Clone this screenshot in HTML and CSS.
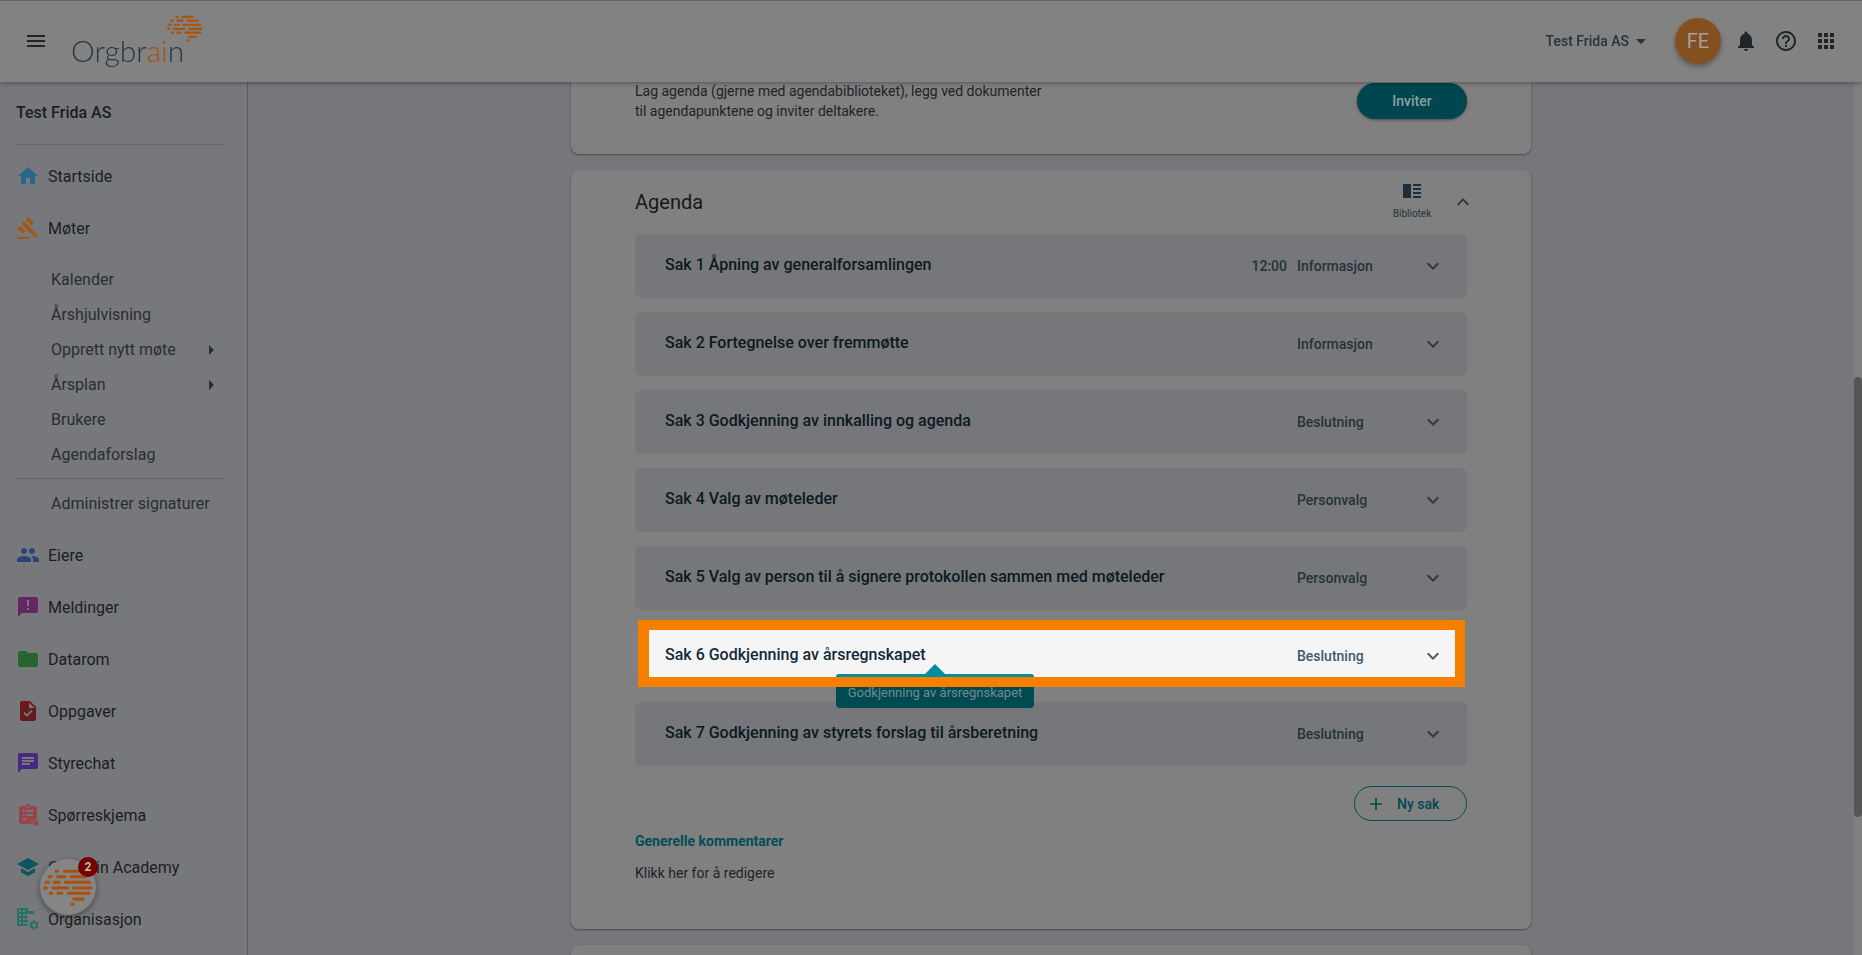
FILE: index.html
```html
<!DOCTYPE html>
<html lang="nb">
<head>
    <meta charset="UTF-8">
    <meta name="viewport" content="width=device-width, initial-scale=1.0">
    <title>Orgbrain</title>
    <link rel="stylesheet" href="styles.css">
</head>
<body>
    <svg class="defs" width="0" height="0">
        <symbol id="brain" viewBox="0 0 150 110">
            <rect x="35" y="2" width="13" height="9" rx="3"/><rect x="60" y="2" width="50" height="9" rx="3"/>
            <rect x="15" y="18" width="13" height="9" rx="3"/><rect x="40" y="18" width="30" height="9" rx="3"/><rect x="80" y="18" width="52" height="9" rx="3"/>
            <rect x="5" y="35" width="15" height="9" rx="3"/><rect x="30" y="35" width="23" height="9" rx="3"/><rect x="63" y="35" width="80" height="9" rx="3"/>
            <rect x="0" y="52" width="15" height="9" rx="3"/><rect x="25" y="52" width="52" height="9" rx="3"/><rect x="88" y="52" width="60" height="9" rx="3"/>
            <rect x="17" y="68" width="13" height="9" rx="3"/><rect x="40" y="68" width="20" height="9" rx="3"/><rect x="72" y="68" width="70" height="9" rx="3"/>
            <rect x="88" y="85" width="37" height="9" rx="3"/>
            <rect x="82" y="101" width="13" height="9" rx="3"/>
        </symbol>
    </svg>

    <header class="topbar">
        <svg class="icon menu-icon" viewBox="0 0 24 24"><path d="M3 18h18v-2H3v2zm0-5h18v-2H3v2zm0-7v2h18V6H3z"/></svg>
        <div class="logo">
            <span class="logo-text">Orgbr<span class="logo-ai">ai</span>n</span>
            <svg class="logo-brain"><use href="#brain"/></svg>
        </div>
        <div class="topbar-right">
            <span class="company-menu">Test Frida AS</span>
            <svg class="caret" viewBox="0 0 24 24"><path d="M7 10l5 5 5-5z"/></svg>
            <div class="avatar">FE</div>
            <svg class="icon" viewBox="0 0 24 24"><path d="M12 22c1.1 0 2-.9 2-2h-4c0 1.1.89 2 2 2zm6-6v-5c0-3.07-1.64-5.64-4.5-6.32V4c0-.83-.67-1.5-1.5-1.5s-1.5.67-1.5 1.5v.68C7.63 5.36 6 7.92 6 11v5l-2 2v1h16v-1l-2-2z"/></svg>
            <svg class="icon" viewBox="0 0 24 24"><path d="M11 18h2v-2h-2v2zm1-16C6.48 2 2 6.48 2 12s4.48 10 10 10 10-4.48 10-10S17.52 2 12 2zm0 18c-4.41 0-8-3.59-8-8s3.59-8 8-8 8 3.59 8 8-3.59 8-8 8zm0-14c-2.21 0-4 1.79-4 4h2c0-1.1.9-2 2-2s2 .9 2 2c0 2-3 1.75-3 5h2c0-2.25 3-2.5 3-5 0-2.21-1.79-4-4-4z"/></svg>
            <svg class="icon" viewBox="0 0 24 24"><path d="M4 8h4V4H4v4zm6 12h4v-4h-4v4zm-6 0h4v-4H4v4zm0-6h4v-4H4v4zm6 0h4v-4h-4v4zm6-10v4h4V4h-4zm-6 4h4V4h-4v4zm6 6h4v-4h-4v4zm0 6h4v-4h-4v4z"/></svg>
        </div>
    </header>

    <div class="app">
        <aside class="sidebar">
            <div class="sidebar-company">Test Frida AS</div>
            <hr class="sidebar-line">
            <a class="nav-item">
                <svg class="icon home" viewBox="0 0 24 24"><path d="M10 20v-6h4v6h5v-8h3L12 3 2 12h3v8z"/></svg>Startside
            </a>
            <a class="nav-item">
                <svg class="icon gavel" viewBox="0 0 24 24"><path d="M1 21h12v2H1zM5.245 8.07l2.83-2.827 14.14 14.142-2.828 2.828zM12.317 1l5.657 5.656-2.83 2.83-5.654-5.66zM3.825 9.485l5.657 5.657-2.828 2.828-5.657-5.657z"/></svg>Møter
            </a>
            <div class="sub-nav">
                <a class="sub-item">Kalender</a>
                <a class="sub-item">Årshjulvisning</a>
                <a class="sub-item">Opprett nytt møte<svg class="sub-arrow" viewBox="0 0 24 24"><path d="M10 17l5-5-5-5v10z"/></svg></a>
                <a class="sub-item">Årsplan<svg class="sub-arrow" viewBox="0 0 24 24"><path d="M10 17l5-5-5-5v10z"/></svg></a>
                <a class="sub-item">Brukere</a>
                <a class="sub-item">Agendaforslag</a>
            </div>
            <hr class="sidebar-line sidebar-line-sub">
            <div class="sub-nav-single">
                <a class="sub-item">Administrer signaturer</a>
            </div>
            <a class="nav-item">
                <svg class="icon people" viewBox="0 0 24 24"><path d="M16 11c1.66 0 2.99-1.34 2.99-3S17.66 5 16 5c-1.66 0-3 1.34-3 3s1.34 3 3 3zm-8 0c1.66 0 2.99-1.34 2.99-3S9.66 5 8 5C6.34 5 5 6.34 5 8s1.34 3 3 3zm0 2c-2.33 0-7 1.17-7 3.5V19h14v-2.5c0-2.33-4.67-3.5-7-3.5zm8 0c-.29 0-.62.02-.97.05 1.16.84 1.97 1.97 1.97 3.45V19h6v-2.5c0-2.33-4.67-3.5-7-3.5z"/></svg>Eiere
            </a>
            <a class="nav-item">
                <svg class="icon messages" viewBox="0 0 24 24"><path d="M20 2H4c-1.1 0-1.99.9-1.99 2L2 22l4-4h14c1.1 0 2-.9 2-2V4c0-1.1-.9-2-2-2zm-7 9h-2V5h2v6zm0 4h-2v-2h2v2z"/></svg>Meldinger
            </a>
            <a class="nav-item">
                <svg class="icon folder" viewBox="0 0 24 24"><path d="M10 4H4c-1.1 0-1.99.9-1.99 2L2 18c0 1.1.9 2 2 2h16c1.1 0 2-.9 2-2V8c0-1.1-.9-2-2-2h-8l-2-2z"/></svg>Datarom
            </a>
            <a class="nav-item">
                <svg class="icon tasks" viewBox="0 0 24 24"><path d="M14 2H6c-1.1 0-1.99.9-1.99 2L4 20c0 1.1.89 2 1.99 2H18c1.1 0 2-.9 2-2V8l-6-6zm-3.06 16L7.4 14.46l1.41-1.41 2.12 2.12 4.24-4.24 1.41 1.41L10.94 18zM13 9V3.5L18.5 9H13z"/></svg>Oppgaver
            </a>
            <a class="nav-item">
                <svg class="icon chat" viewBox="0 0 24 24"><path d="M20 2H4c-1.1 0-1.99.9-1.99 2L2 22l4-4h14c1.1 0 2-.9 2-2V4c0-1.1-.9-2-2-2zM6 9h12v2H6V9zm8 5H6v-2h8v2zm4-6H6V6h12v2z"/></svg>Styrechat
            </a>
            <a class="nav-item">
                <svg class="icon survey" viewBox="0 0 24 24"><path d="M19 3h-4.18C14.4 1.84 13.3 1 12 1c-1.3 0-2.4.84-2.82 2H5c-1.1 0-2 .9-2 2v14c0 1.1.9 2 2 2h14c1.1 0 2-.9 2-2V5c0-1.1-.9-2-2-2zm-7 0c.55 0 1 .45 1 1s-.45 1-1 1-1-.45-1-1 .45-1 1-1zM10 17H7v-2h3v2zm7-4H10v-2h7v2zm0-4H10V7h7v2zM8.5 9H7V7h1.5v2zm0 4H7v-2h1.5v2z"/><circle cx="20" cy="20" r="3.2" stroke="#76777a" stroke-width="1"/></svg>Spørreskjema
            </a>
            <a class="nav-item">
                <svg class="icon school" viewBox="0 0 24 24"><path d="M5 13.18v4L12 21l7-3.82v-4L12 17l-7-3.82zM12 3L1 9l11 6 11-6L12 3z"/></svg>Orgbrain Academy
            </a>
            <a class="nav-item">
                <svg class="icon domain" viewBox="0 0 24 24"><path d="M12 4V1H1v18h11v-2h-2v-2h2v-2h-2v-2h2V9h-2V7h8V4h-6zM5 17H3v-2h2v2zm0-4H3v-2h2v2zm0-4H3V7h2v2zm0-4H3V3h2v2zm4 12H7v-2h2v2zm0-4H7v-2h2v2zm0-4H7V7h2v2zm0-4H7V3h2v2z"/><path transform="translate(12 12) scale(.5)" d="M19.14 12.94c.04-.3.06-.61.06-.94 0-.32-.02-.64-.07-.94l2.03-1.58c.18-.14.23-.41.12-.61l-1.92-3.32c-.12-.22-.37-.29-.59-.22l-2.39.96c-.5-.38-1.03-.7-1.62-.94l-.36-2.54c-.04-.24-.24-.41-.48-.41h-3.84c-.24 0-.43.17-.47.41l-.36 2.54c-.59.24-1.13.57-1.62.94l-2.39-.96c-.22-.08-.47 0-.59.22L2.74 8.87c-.12.21-.08.47.12.61l2.03 1.58c-.05.3-.09.63-.09.94s.02.64.07.94l-2.03 1.58c-.18.14-.23.41-.12.61l1.92 3.32c.12.22.37.29.59.22l2.39-.96c.5.38 1.03.7 1.62.94l.36 2.54c.05.24.24.41.48.41h3.84c.24 0 .44-.17.47-.41l.36-2.54c.59-.24 1.13-.56 1.62-.94l2.39.96c.22.08.47 0 .59-.22l1.92-3.32c.12-.22.07-.47-.12-.61l-2.01-1.58zM12 15.6c-1.98 0-3.6-1.62-3.6-3.6s1.62-3.6 3.6-3.6 3.6 1.62 3.6 3.6-1.62 3.6-3.6 3.6z"/></svg>Organisasjon
            </a>
        </aside>

        <main class="main">
            <section class="card card-invite">
                <p class="invite-text">Lag agenda (gjerne med agendabiblioteket), legg ved dokumenter til agendapunktene og inviter deltakere.</p>
                <button class="btn-invite">Inviter</button>
            </section>

            <section class="card card-agenda">
                <div class="agenda-head">
                    <h2>Agenda</h2>
                    <div class="library">
                        <svg class="library-icon" viewBox="0 0 18 14"><rect x="0" y="0" width="8" height="14"/><rect x="10" y="0" width="8" height="2"/><rect x="10" y="4" width="8" height="2"/><rect x="10" y="8" width="8" height="2"/><rect x="10" y="12" width="8" height="2"/></svg>
                        <span>Bibliotek</span>
                    </div>
                    <svg class="icon chevron-up" viewBox="0 0 24 24"><path d="M12 8l-6 6 1.41 1.41L12 10.83l4.59 4.58L18 14z"/></svg>
                </div>

                <div class="agenda-list">
                    <div class="agenda-row">
                        <span class="row-title">Sak 1 Åpning av generalforsamlingen</span>
                        <span class="row-time">12:00</span>
                        <span class="row-type">Informasjon</span>
                        <svg class="icon row-chevron" viewBox="0 0 24 24"><path d="M16.59 8.59L12 13.17 7.41 8.59 6 10l6 6 6-6z"/></svg>
                    </div>
                    <div class="agenda-row">
                        <span class="row-title">Sak 2 Fortegnelse over fremmøtte</span>
                        <span class="row-type">Informasjon</span>
                        <svg class="icon row-chevron" viewBox="0 0 24 24"><path d="M16.59 8.59L12 13.17 7.41 8.59 6 10l6 6 6-6z"/></svg>
                    </div>
                    <div class="agenda-row">
                        <span class="row-title">Sak 3 Godkjenning av innkalling og agenda</span>
                        <span class="row-type">Beslutning</span>
                        <svg class="icon row-chevron" viewBox="0 0 24 24"><path d="M16.59 8.59L12 13.17 7.41 8.59 6 10l6 6 6-6z"/></svg>
                    </div>
                    <div class="agenda-row">
                        <span class="row-title">Sak 4 Valg av møteleder</span>
                        <span class="row-type">Personvalg</span>
                        <svg class="icon row-chevron" viewBox="0 0 24 24"><path d="M16.59 8.59L12 13.17 7.41 8.59 6 10l6 6 6-6z"/></svg>
                    </div>
                    <div class="agenda-row">
                        <span class="row-title">Sak 5 Valg av person til å signere protokollen sammen med møteleder</span>
                        <span class="row-type">Personvalg</span>
                        <svg class="icon row-chevron" viewBox="0 0 24 24"><path d="M16.59 8.59L12 13.17 7.41 8.59 6 10l6 6 6-6z"/></svg>
                    </div>
                    <div class="agenda-row agenda-row-active">
                        <div class="row-tooltip">Godkjenning av årsregnskapet</div>
                        <div class="row-highlight"></div>
                        <div class="tooltip-strip"></div>
                        <div class="tooltip-arrow"></div>
                        <span class="row-title">Sak 6 Godkjenning av årsregnskapet</span>
                        <span class="row-type">Beslutning</span>
                        <svg class="icon row-chevron" viewBox="0 0 24 24"><path d="M16.59 8.59L12 13.17 7.41 8.59 6 10l6 6 6-6z"/></svg>
                    </div>
                    <div class="agenda-row">
                        <span class="row-title">Sak 7 Godkjenning av styrets forslag til årsberetning</span>
                        <span class="row-type">Beslutning</span>
                        <svg class="icon row-chevron" viewBox="0 0 24 24"><path d="M16.59 8.59L12 13.17 7.41 8.59 6 10l6 6 6-6z"/></svg>
                    </div>
                </div>

                <button class="btn-new">
                    <svg class="btn-new-icon" viewBox="0 0 24 24"><path d="M19 13h-6v6h-2v-6H5v-2h6V5h2v6h6v2z"/></svg>Ny sak
                </button>

                <div class="comments-title">Generelle kommentarer</div>
                <div class="comments-text">Klikk her for å redigere</div>
            </section>

            <section class="card card-next"></section>
        </main>

        <div class="scrollbar"><div class="scrollbar-thumb"></div></div>
    </div>

    <div class="help-fab">
        <svg class="help-brain"><use href="#brain"/></svg>
        <span class="help-badge">2</span>
    </div>
</body>
</html>
```

FILE: styles.css
```css
* {
    box-sizing: border-box;
}
html, body {
    height: 100%;
    overflow: hidden;
}
body {
    margin: 0;
    font-family: Roboto, Arial, sans-serif;
    font-size: 14px;
    color: #1f2326;
    background-color: #76777a;
}
.defs {
    position: absolute;
}
.icon {
    width: 24px;
    height: 24px;
    flex: none;
    fill: #1f2529;
}

/* top bar */
.topbar {
    position: fixed;
    top: 0;
    left: 0;
    right: 0;
    z-index: 10;
    height: 82px;
    display: flex;
    align-items: center;
    padding-left: 24px;
    padding-right: 24px;
    padding-bottom: 1px;
    background-color: #828282;
    border-top: 1px solid #666;
    box-shadow: 0 1px 5px rgba(0, 0, 0, 0.35);
}
.menu-icon {
    margin-right: 24px;
}
.logo {
    position: relative;
    height: 60px;
    width: 140px;
}
.logo-text {
    position: absolute;
    left: -1px;
    top: 19px;
    font-family: Lato, sans-serif;
    font-weight: 300;
    font-size: 30px;
    line-height: 40px;
    color: #233a46;
}
.logo-ai {
    color: #a8520c;
}
.logo-brain {
    position: absolute;
    left: 95px;
    top: 4px;
    width: 36px;
    height: 27px;
    fill: #a8520c;
}
.topbar-right {
    margin-left: auto;
    display: flex;
    align-items: center;
}
.company-menu {
    font-weight: 500;
    color: #24333b;
}
.caret {
    width: 24px;
    height: 24px;
    fill: #24333b;
    margin-right: 22px;
}
.avatar {
    width: 46px;
    height: 46px;
    border-radius: 50%;
    margin-right: 13px;
    background-color: #85501f;
    color: #a3a3a3;
    font-size: 20px;
    display: flex;
    align-items: center;
    justify-content: center;
    box-shadow: 0 3px 5px rgba(0, 0, 0, 0.3);
}
.topbar-right .icon + .icon {
    margin-left: 16px;
}

/* layout */
.app {
    display: flex;
    height: 100vh;
    overflow: hidden;
}

/* sidebar */
.sidebar {
    width: 248px;
    flex: none;
    padding-top: 98px;
    border-right: 1px solid #5a5b5e;
    background-color: #77787b;
}
.sidebar-company {
    padding-left: 16px;
    font-size: 16px;
    font-weight: 500;
    line-height: 30px;
    color: #1b1e21;
}
.sidebar-line {
    margin: 16px 23px 5px 16px;
    border: 0;
    border-top: 1px solid #66676a;
}
.nav-item {
    display: flex;
    align-items: center;
    gap: 8px;
    height: 52px;
    padding-left: 16px;
    font-size: 16px;
    color: #1b1e21;
}
.sub-nav {
    padding-top: 8px;
}
.sub-nav-single {
    margin-bottom: 8px;
}
.sub-item {
    display: flex;
    align-items: center;
    height: 35px;
    padding-left: 51px;
    padding-right: 24px;
    font-size: 16px;
    color: #292e31;
}
.sub-arrow {
    width: 24px;
    height: 24px;
    margin-left: auto;
    fill: #292e31;
}
.sidebar-line-sub {
    margin: 6px 23px 7px 16px;
}
.home { fill: #2a658a; }
.gavel { fill: #a05a18; }
.people { fill: #2a4478; }
.messages { fill: #642766; }
.folder { fill: #28642e; }
.tasks { fill: #651b1d; }
.chat { fill: #462a7e; }
.survey { fill: #984549; }
.school { fill: #0c5460; }
.domain { fill: #277268; }

/* main column */
.main {
    flex: 1;
    min-width: 0;
    padding-top: 40px;
    display: flex;
    flex-direction: column;
    align-items: center;
    gap: 16px;
    overflow: hidden;
}
.card {
    width: 960px;
    flex: none;
    padding-left: 64px;
    padding-right: 64px;
    background-color: #808080;
    border-radius: 8px;
    box-shadow: 0 1px 2px rgba(0, 0, 0, 0.4);
}
.card-invite {
    height: 114px;
    padding-top: 41px;
    display: flex;
    justify-content: space-between;
    align-items: flex-start;
}
.invite-text {
    margin: 0;
    max-width: 420px;
    line-height: 20px;
    color: #1f2326;
}
.btn-invite {
    width: 110px;
    height: 36px;
    margin-top: 2px;
    border: none;
    border-radius: 18px;
    background-color: #00464f;
    color: #8d9fa1;
    font-family: inherit;
    font-size: 14px;
    font-weight: 500;
    box-shadow: 0 1px 3px rgba(0, 0, 0, 0.4);
}
.card-agenda {
    display: flex;
    flex-direction: column;
    height: 759px;
}
.agenda-head {
    height: 64px;
    display: flex;
    align-items: center;
}
.agenda-head h2 {
    margin: 0 auto 0 0;
    font-size: 20px;
    font-weight: 400;
    color: #15181b;
}
.library {
    width: 50px;
    padding-bottom: 1px;
    display: flex;
    flex-direction: column;
    align-items: center;
    gap: 10px;
    font-size: 10px;
    color: #24333b;
}
.library-icon {
    width: 18px;
    height: 14px;
    fill: #1f2e36;
}
.chevron-up {
    margin-left: 14px;
    margin-right: -8px;
    fill: #353739;
}
.agenda-list {
    display: flex;
    flex-direction: column;
    gap: 14px;
}
.agenda-row {
    position: relative;
    height: 64px;
    display: flex;
    align-items: center;
    padding-left: 30px;
    padding-right: 22px;
    border-radius: 6px;
    background-color: #76777a;
}
.row-title {
    position: relative;
    z-index: 4;
    margin-right: auto;
    margin-top: -4px;
    font-size: 16px;
    font-weight: 500;
    color: #0b1a22;
}
.row-time {
    margin-right: 10px;
    font-size: 14px;
    font-weight: 500;
    color: #24333b;
}
.row-type {
    position: relative;
    z-index: 4;
    width: 124px;
    font-size: 14px;
    font-weight: 500;
    color: #24333b;
}
.row-chevron {
    position: relative;
    z-index: 4;
    fill: #353739;
}

/* highlighted row with the tooltip under the marker */
.agenda-row-active {
    background-color: transparent;
}
.agenda-row-active .row-title {
    color: #12293a;
}
.agenda-row-active .row-type {
    color: #41596a;
}
.agenda-row-active .row-chevron {
    fill: #555759;
}
.row-highlight {
    position: absolute;
    z-index: 2;
    left: 3px;
    top: -4px;
    width: 827px;
    height: 67px;
    border: 10px solid #f77f00;
    border-left-width: 11px;
    background-color: #f5f5f5;
}
.row-tooltip {
    position: absolute;
    z-index: 1;
    left: 201px;
    top: 50px;
    width: 198px;
    height: 34px;
    padding-top: 3px;
    border-radius: 4px;
    background-color: #004a52;
    color: #728a8d;
    font-size: 13px;
    line-height: 31px;
    text-align: center;
}
.tooltip-strip {
    position: absolute;
    z-index: 3;
    left: 201px;
    top: 50px;
    width: 198px;
    height: 3px;
    border-radius: 3px 3px 0 0;
    background-color: #008fa0;
}
.tooltip-arrow {
    position: absolute;
    z-index: 3;
    left: 290px;
    top: 40px;
    width: 20px;
    height: 10px;
    background-color: #008fa0;
    clip-path: polygon(50% 0, 100% 100%, 0 100%);
}

/* under the list */
.btn-new {
    align-self: flex-end;
    width: 113px;
    height: 35px;
    margin-top: 20px;
    padding-left: 11px;
    display: flex;
    align-items: center;
    gap: 11px;
    border: 1px solid #004f58;
    border-radius: 18px;
    background-color: transparent;
    color: #004850;
    font-family: inherit;
    font-size: 14px;
    font-weight: 500;
}
.btn-new-icon {
    width: 20px;
    height: 20px;
    fill: #004850;
}
.comments-title {
    margin-top: 10px;
    font-weight: 700;
    line-height: 20px;
    color: #004e56;
}
.comments-text {
    margin-top: 12px;
    line-height: 20px;
    color: #1f2326;
}
.card-next {
    height: 60px;
}

/* scrollbar */
.scrollbar {
    width: 8px;
    flex: none;
    background-color: #808080;
    padding-top: 377px;
}
.scrollbar-thumb {
    height: 440px;
    border-radius: 4px;
    background-color: #555;
}

/* help button, floats over the sidebar */
.help-fab {
    position: fixed;
    z-index: 20;
    left: 40px;
    top: 859px;
    width: 56px;
    height: 56px;
    border-radius: 50%;
    background-color: #858585;
    box-shadow: 0 2px 6px rgba(0, 0, 0, 0.4);
    display: flex;
    align-items: center;
    justify-content: center;
}
.help-brain {
    width: 50px;
    height: 37px;
    fill: #ab4f0a;
}
.help-badge {
    position: absolute;
    right: -2px;
    top: -2px;
    width: 20px;
    height: 20px;
    border-radius: 50%;
    background-color: #760000;
    color: #bbb;
    font-size: 12px;
    font-weight: 700;
    line-height: 20px;
    text-align: center;
}
```
